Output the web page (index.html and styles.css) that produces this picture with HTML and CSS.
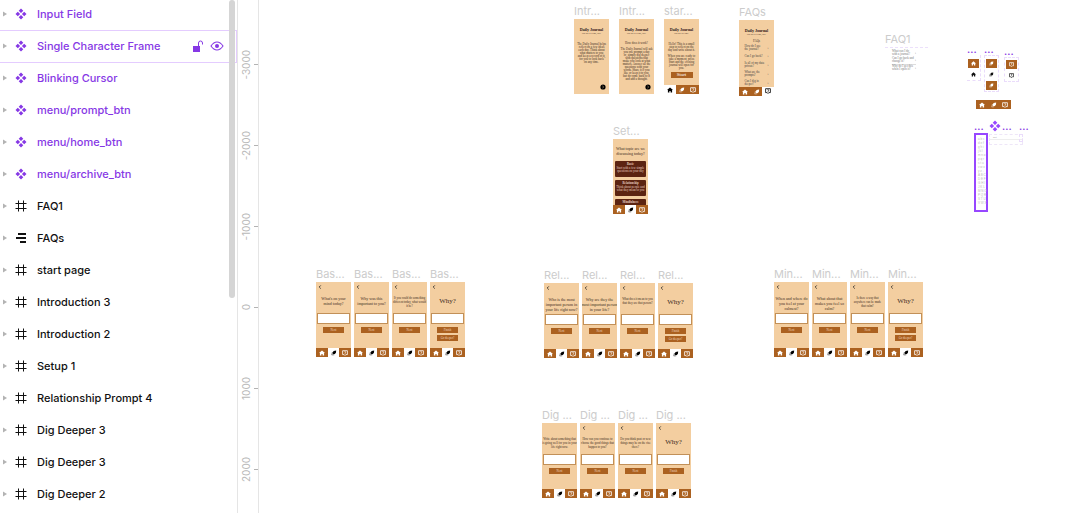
FILE: index.html
```html
<!DOCTYPE html>
<html lang="en">
<head>
<meta charset="utf-8">
<meta name="viewport" content="width=device-width, initial-scale=1">
<title>Journal design file</title>
<link rel="stylesheet" href="styles.css">
</head>
<body>
<svg class="defs" aria-hidden="true">
  <symbol id="arrow" viewBox="0 0 4 6"><path d="M0 .5 4 3 0 5.5z" fill="#b3b3b3"/></symbol>
  <symbol id="component" viewBox="0 0 12 12"><path d="M6 .5 8.3 2.8 6 5.1 3.7 2.8zM6 6.9 8.3 9.2 6 11.5 3.7 9.2zM2.8 3.7 5.1 6 2.8 8.3.5 6zM9.2 3.7 11.5 6 9.2 8.3 6.9 6z" fill="currentColor"/></symbol>
  <symbol id="frame" viewBox="0 0 12 12"><path d="M3.5.5v11M8.5.5v11M.5 3.5h11M.5 8.5h11" stroke="currentColor" fill="none"/></symbol>
  <symbol id="stack" viewBox="0 0 12 12"><path d="M3 2h8M1 6h10M5 10h6" stroke="currentColor" stroke-width="2" fill="none"/></symbol>
  <symbol id="unlock" viewBox="0 0 12 12"><path d="M1 6h7v6H1z" fill="currentColor"/><path d="M6.5 6V3a2 2 0 0 1 4 0v1.5" stroke="currentColor" fill="none"/></symbol>
  <symbol id="eye" viewBox="0 0 14 10"><path d="M1 5C3 2 5 1 7 1s4 1 6 4c-2 3-4 4-6 4S3 8 1 5z" stroke="currentColor" fill="none" stroke-width="1.1"/><circle cx="7" cy="5" r="2" fill="currentColor"/></symbol>
  <symbol id="home" viewBox="0 0 6 6"><path d="M3 .4 6 3.1H5.1v2.4H3.6V4H2.4v1.5H.9V3.1H0z" fill="currentColor"/></symbol>
  <symbol id="pen" viewBox="0 0 6 6"><path d="M2.6.9 5.2.6 4.9 2.8 3.9 4.1 1.7 4.3 1.8 2.2z" fill="currentColor"/><path d="M1.3 2.3.7 5l2.6-.2" stroke="currentColor" stroke-width=".6" stroke-opacity=".7" fill="none"/></symbol>
  <symbol id="archive" viewBox="0 0 6 6"><path d="M.6.7h4.8v3.9H3.8L3 5.5l-.8-.9H.6z" stroke="currentColor" stroke-width=".8" fill="none"/><path d="M2.3 1.7h1.3v1L3 3.1v.8" stroke="currentColor" stroke-width=".6" fill="none"/></symbol>
  <symbol id="back" viewBox="0 0 4 4"><path d="M2.8.4 1.2 2l1.6 1.6" stroke="#222" stroke-width=".8" fill="none"/></symbol>
  <symbol id="next" viewBox="0 0 6 6"><circle cx="3" cy="3" r="2.6" fill="#000"/><path d="M2.5 2 3.6 3 2.5 4" stroke="#f3cea0" stroke-width=".6" fill="none"/></symbol>
  <symbol id="nav-prompt" viewBox="0 0 35 9">
    <path d="M0 0h35v9H0z" fill="#ab6120"/><path d="M12 0h11v9H12z" fill="#fff"/>
    <use href="#home" x="3" y="2" width="6" height="6" color="#fff"/><use href="#pen" x="15" y="2" width="6" height="6" color="#000"/><use href="#archive" x="26" y="2" width="6" height="6" color="#fff"/>
  </symbol>
  <symbol id="nav-home" viewBox="0 0 35 9">
    <path d="M0 0h12v9H0z" fill="#fff"/><path d="M12 0h23v9H12z" fill="#ab6120"/>
    <use href="#home" x="3" y="2" width="6" height="6" color="#000"/><use href="#pen" x="15" y="2" width="6" height="6" color="#fff"/><use href="#archive" x="26" y="2" width="6" height="6" color="#fff"/>
  </symbol>
  <symbol id="nav-archive" viewBox="0 0 35 9">
    <path d="M0 0h23v9H0z" fill="#ab6120"/><path d="M23 0h12v9H23z" fill="#fff"/>
    <use href="#home" x="3" y="2" width="6" height="6" color="#fff"/><use href="#pen" x="15" y="2" width="6" height="6" color="#fff"/><use href="#archive" x="26" y="1" width="6" height="6" color="#000"/>
  </symbol>
  <symbol id="nav-plain" viewBox="0 0 35 9">
    <path d="M0 0h35v9H0z" fill="#ab6120"/>
    <use href="#home" x="3" y="2" width="6" height="6" color="#fff"/><use href="#pen" x="15" y="2" width="6" height="6" color="#fff"/><use href="#archive" x="26" y="2" width="6" height="6" color="#fff"/>
  </symbol>
</svg>

<div class="app">
  <aside class="layers" aria-label="Layers">
    <ul class="layer-list">
      <li class="layer component"><svg class="arrow"><use href="#arrow"/></svg><svg class="icon"><use href="#component"/></svg><span class="name">Input Field</span></li>
      <li class="layer component hovered"><svg class="arrow"><use href="#arrow"/></svg><svg class="icon"><use href="#component"/></svg><span class="name">Single Character Frame</span><button class="tool" aria-label="Lock"><svg class="icon"><use href="#unlock"/></svg></button><button class="tool" aria-label="Hide"><svg class="eye"><use href="#eye"/></svg></button></li>
      <li class="layer component"><svg class="arrow"><use href="#arrow"/></svg><svg class="icon"><use href="#component"/></svg><span class="name">Blinking Cursor</span></li>
      <li class="layer component"><svg class="arrow"><use href="#arrow"/></svg><svg class="icon"><use href="#component"/></svg><span class="name">menu/prompt_btn</span></li>
      <li class="layer component"><svg class="arrow"><use href="#arrow"/></svg><svg class="icon"><use href="#component"/></svg><span class="name">menu/home_btn</span></li>
      <li class="layer component"><svg class="arrow"><use href="#arrow"/></svg><svg class="icon"><use href="#component"/></svg><span class="name">menu/archive_btn</span></li>
      <li class="layer"><svg class="arrow"><use href="#arrow"/></svg><svg class="icon"><use href="#frame"/></svg><span class="name">FAQ1</span></li>
      <li class="layer"><svg class="arrow"><use href="#arrow"/></svg><svg class="icon"><use href="#stack"/></svg><span class="name">FAQs</span></li>
      <li class="layer"><svg class="arrow"><use href="#arrow"/></svg><svg class="icon"><use href="#frame"/></svg><span class="name">start page</span></li>
      <li class="layer"><svg class="arrow"><use href="#arrow"/></svg><svg class="icon"><use href="#frame"/></svg><span class="name">Introduction 3</span></li>
      <li class="layer"><svg class="arrow"><use href="#arrow"/></svg><svg class="icon"><use href="#frame"/></svg><span class="name">Introduction 2</span></li>
      <li class="layer"><svg class="arrow"><use href="#arrow"/></svg><svg class="icon"><use href="#frame"/></svg><span class="name">Setup 1</span></li>
      <li class="layer"><svg class="arrow"><use href="#arrow"/></svg><svg class="icon"><use href="#frame"/></svg><span class="name">Relationship Prompt 4</span></li>
      <li class="layer"><svg class="arrow"><use href="#arrow"/></svg><svg class="icon"><use href="#frame"/></svg><span class="name">Dig Deeper 3</span></li>
      <li class="layer"><svg class="arrow"><use href="#arrow"/></svg><svg class="icon"><use href="#frame"/></svg><span class="name">Dig Deeper 3</span></li>
      <li class="layer"><svg class="arrow"><use href="#arrow"/></svg><svg class="icon"><use href="#frame"/></svg><span class="name">Dig Deeper 2</span></li>
    </ul>
    <div class="thumb"></div>
  </aside>

  <div class="ruler">
    <div class="mark"><span>-3000</span></div>
    <div class="mark"><span>-2000</span></div>
    <div class="mark"><span>-1000</span></div>
    <div class="mark"><span>0</span></div>
    <div class="mark"><span>1000</span></div>
    <div class="mark"><span>2000</span></div>
  </div>

  <main class="canvas">
    <section class="group at-intro">
      <figure class="board"><figcaption>Intr...</figcaption>
        <div class="screen cover"><h2>Daily Journal</h2><p class="sub">One day at a time, easy.</p><p class="copy">The Daily Journal helps<br>reflect on a few ideas<br>each day. Think about<br>what matters to you<br>and keep a record of it,<br>for you to look back<br>on any time.</p><svg class="next"><use href="#next"/></svg></div></figure>
      <figure class="board"><figcaption>Intr...</figcaption>
        <div class="screen cover"><h2>Daily Journal</h2><p class="sub">One day at a time, easy.</p><p class="copy long">How does it work?<br><br>The Daily Journal will ask<br>you one prompt a day<br>or, simply dig deeper<br>with questions that<br>make you look at what<br>matters. Answer all the<br>questions with your<br>words. Share it if you<br>like or keep it to you,<br>but do come back to it<br>and add a thought.</p><svg class="next"><use href="#next"/></svg></div></figure>
      <figure class="board"><figcaption>star...</figcaption>
        <div class="screen cover"><h2>Daily Journal</h2><p class="sub">One day at a time.</p><p class="copy start">Hello! This is a small<br>step to reflect on the<br>day and write about it.<br><br>When you are ready to<br>take a moment, press<br>Start and the evening<br>journal will open for<br>you.</p><button class="start-btn">Start</button><svg class="nav"><use href="#nav-home"/></svg></div></figure>
    </section>

    <section class="group at-faqs">
      <figure class="board"><figcaption>FAQs</figcaption>
        <div class="screen cover tall"><h2>Daily Journal</h2><p class="sub">One day at a time, easy.</p><h3>FAQs</h3>
          <ul class="faq"><li><span>How do I use<br>the journal?</span><b>›</b></li><li><span>Can I go back?</span><b>›</b></li><li><span>Is all of my data<br>private?</span><b>›</b></li><li><span>What are the<br>prompts?</span><b>›</b></li><li><span>Can I dig in<br>deeper?</span><b>›</b></li></ul>
          <svg class="nav"><use href="#nav-archive"/></svg></div></figure>
    </section>

    <section class="group at-setup">
      <figure class="board"><figcaption>Set...</figcaption>
        <div class="screen setup"><p class="pick">What topic are we<br>discussing today?</p>
          <div class="cards"><div class="card"><b>Basic</b>Start with a few simple<br>questions on your day</div><div class="card"><b>Relationship</b>Think about people and<br>what they mean to you</div><div class="card last"><b>Mindfulness</b></div></div>
          <svg class="nav"><use href="#nav-prompt"/></svg></div></figure>
    </section>

    <section class="group at-basic">
      <figure class="board"><figcaption>Bas...</figcaption>
        <div class="screen prompt"><svg class="back"><use href="#back"/></svg><p class="ask">What's on your<br>mind today?</p><input aria-label="Answer"><button>Next</button><svg class="nav"><use href="#nav-prompt"/></svg></div></figure>
      <figure class="board"><figcaption>Bas...</figcaption>
        <div class="screen prompt"><svg class="back"><use href="#back"/></svg><p class="ask">Why was this<br>important to you?</p><input aria-label="Answer"><button>Next</button><svg class="nav"><use href="#nav-prompt"/></svg></div></figure>
      <figure class="board"><figcaption>Bas...</figcaption>
        <div class="screen prompt"><svg class="back"><use href="#back"/></svg><p class="ask small">If you could do something<br>different today, what would<br>it be?</p><input aria-label="Answer"><button>Next</button><svg class="nav"><use href="#nav-prompt"/></svg></div></figure>
      <figure class="board"><figcaption>Bas...</figcaption>
        <div class="screen prompt"><svg class="back"><use href="#back"/></svg><p class="ask why">Why?</p><input aria-label="Answer"><button>Finish</button><button>Go deeper?</button><svg class="nav"><use href="#nav-prompt"/></svg></div></figure>
    </section>

    <section class="group at-relation">
      <figure class="board"><figcaption>Rel...</figcaption>
        <div class="screen prompt"><svg class="back"><use href="#back"/></svg><p class="ask">Who is the most<br>important person in<br>your life right now?</p><input aria-label="Answer"><button>Next</button><svg class="nav"><use href="#nav-prompt"/></svg></div></figure>
      <figure class="board"><figcaption>Rel...</figcaption>
        <div class="screen prompt"><svg class="back"><use href="#back"/></svg><p class="ask">Why are they the<br>most important person<br>in your life?</p><input aria-label="Answer"><button>Next</button><svg class="nav"><use href="#nav-prompt"/></svg></div></figure>
      <figure class="board"><figcaption>Rel...</figcaption>
        <div class="screen prompt"><svg class="back"><use href="#back"/></svg><p class="ask small">What does it mean to you<br>that they are that person?</p><input aria-label="Answer"><button>Next</button><svg class="nav"><use href="#nav-prompt"/></svg></div></figure>
      <figure class="board"><figcaption>Rel...</figcaption>
        <div class="screen prompt"><svg class="back"><use href="#back"/></svg><p class="ask why">Why?</p><input aria-label="Answer"><button>Finish</button><button>Go deeper?</button><svg class="nav"><use href="#nav-prompt"/></svg></div></figure>
    </section>

    <section class="group at-mind">
      <figure class="board"><figcaption>Min...</figcaption>
        <div class="screen prompt"><svg class="back"><use href="#back"/></svg><p class="ask">When and where do<br>you feel at your<br>calmest?</p><input aria-label="Answer"><button>Next</button><svg class="nav"><use href="#nav-prompt"/></svg></div></figure>
      <figure class="board"><figcaption>Min...</figcaption>
        <div class="screen prompt"><svg class="back"><use href="#back"/></svg><p class="ask">What about that<br>makes you feel so<br>calm?</p><input aria-label="Answer"><button>Next</button><svg class="nav"><use href="#nav-prompt"/></svg></div></figure>
      <figure class="board"><figcaption>Min...</figcaption>
        <div class="screen prompt"><svg class="back"><use href="#back"/></svg><p class="ask small">Is there a way that<br>anywhere can be made<br>that calm?</p><input aria-label="Answer"><button>Next</button><svg class="nav"><use href="#nav-prompt"/></svg></div></figure>
      <figure class="board"><figcaption>Min...</figcaption>
        <div class="screen prompt"><svg class="back"><use href="#back"/></svg><p class="ask why">Why?</p><input aria-label="Answer"><button>Finish</button><button>Go deeper?</button><svg class="nav"><use href="#nav-prompt"/></svg></div></figure>
    </section>

    <section class="group at-dig">
      <figure class="board"><figcaption>Dig ...</figcaption>
        <div class="screen prompt"><svg class="back"></svg><p class="ask small">Write about something that<br>is going well for you in your<br>life right now.</p><input aria-label="Answer"><button>Next</button><svg class="nav"><use href="#nav-prompt"/></svg></div></figure>
      <figure class="board"><figcaption>Dig ...</figcaption>
        <div class="screen prompt"><svg class="back"><use href="#back"/></svg><p class="ask small">How can you continue to<br>choose the good things that<br>happen to you?</p><input aria-label="Answer"><button>Next</button><svg class="nav"><use href="#nav-prompt"/></svg></div></figure>
      <figure class="board"><figcaption>Dig ...</figcaption>
        <div class="screen prompt"><svg class="back"><use href="#back"/></svg><p class="ask small">Do you think past or new<br>things may be on the rise<br>there?</p><input aria-label="Answer"><button>Next</button><svg class="nav"><use href="#nav-prompt"/></svg></div></figure>
      <figure class="board"><figcaption>Dig ...</figcaption>
        <div class="screen prompt"><svg class="back"><use href="#back"/></svg><p class="ask why">Why?</p><input aria-label="Answer"><button>Finish</button><svg class="nav"><use href="#nav-prompt"/></svg></div></figure>
    </section>

    <section class="faq-part">
      <h4>FAQ1</h4>
      <ul class="faq"><li><span>What can I do<br>with a journal?</span><b>›</b></li><li><span>Can I go back and<br>change it?</span><b>›</b></li><li class="ruled"><span>Why do I get this<br>when I open it?</span><b>›</b></li></ul>
    </section>

    <section class="set at-home-set"><h4>...</h4><div class="variants open"><svg class="chip"><use href="#home"/></svg><svg class="chip plain"><use href="#home"/></svg></div></section>
    <section class="set at-pen-set"><h4>...</h4><div class="variants"><svg class="chip"><use href="#pen"/></svg><svg class="chip plain"><use href="#pen"/></svg><svg class="chip"><use href="#pen"/></svg></div></section>
    <section class="set at-archive-set"><h4>...</h4><div class="variants"><svg class="chip"><use href="#archive"/></svg><svg class="chip plain"><use href="#archive"/></svg></div></section>
    <svg class="nav at-menu"><use href="#nav-plain"/></svg>

    <svg class="icon badge"><use href="#component"/></svg>
    <section class="set at-characters"><h4>...</h4><div class="characters">a b c<br>d e f<br>g h i<br>j k l<br>m n o<br>p q r<br>s t u<br>v w x<br>y z .<br>A B C<br>D E F<br>G H I<br>J K L<br>M N O<br>P Q R<br>S T U<br>V W X</div></section>
    <section class="set at-field"><h4>...</h4><div class="field"><span>Text</span></div></section>
    <section class="set at-cursor"><h4>...</h4><div class="cursor"></div></section>
  </main>
</div>
</body>
</html>
```
FILE: styles.css
```css
* { box-sizing: border-box; }
body, ul, p, h2, h3, h4, figure { margin: 0; padding: 0; }
ul { list-style: none; }
body { font-family: Inter, "Liberation Sans", sans-serif; font-size: 11px; background: #fff; color: #111; }
svg { display: block; flex: none; }
button { font: inherit; border: 0; padding: 0; margin: 0; }
.defs { position: absolute; width: 0; height: 0; }

.app { display: flex; height: 100vh; overflow: hidden; }

/* Layer list */
.layers { position: relative; flex: none; width: 238px; border-right: 1px solid #e5e5e5; overflow: hidden; }
.layer-list { margin-top: -2px; }
.layer { display: flex; align-items: center; height: 32px; padding: 0 13px 0 3px; }
.layer.component { color: #8638e5; }
.layer.hovered { height: 33px; margin-bottom: -1px; padding-right: 12px; padding-bottom: 1px; border: 1px solid #e4ccff; border-left: 0; }
.arrow { width: 4px; height: 6px; margin-right: 8px; }
.icon { width: 12px; height: 12px; }
.name { flex: 1; margin-left: 10px; font-weight: 500; white-space: nowrap; }
.tool { color: inherit; background: none; margin-left: 6px; }
.eye { width: 14px; height: 10px; }
.thumb { position: absolute; top: 0; right: 2px; width: 6px; height: 298px; border-radius: 3px; background: #d5d5d5; }

/* Ruler */
.ruler { flex: none; width: 21px; padding-top: 24px; border-right: 1px solid #e5e5e5; }
.mark { display: flex; align-items: center; height: 81px; color: #b8b8b8; font-size: 10px; background: linear-gradient(#b3b3b3, #b3b3b3) right center / 4px 1px no-repeat; }
.mark span { width: 16px; writing-mode: vertical-rl; transform: rotate(180deg); line-height: 16px; text-align: center; }

/* Canvas placement */
.canvas { position: relative; flex: 1; min-width: 0; }
.group, .set, .faq-part, .at-menu, .badge { position: absolute; }
.group { display: flex; gap: 3px; }
.at-intro { left: 315px; top: 4px; gap: 10px; }
.at-faqs { left: 480px; top: 5px; }
.at-setup { left: 354px; top: 124px; }
.at-basic { left: 57px; top: 267px; }
.at-relation { left: 285px; top: 268px; }
.at-mind { left: 515px; top: 267px; }
.at-dig { left: 283px; top: 408px; }
.faq-part { left: 626px; top: 32px; }
.at-home-set { left: 708px; top: 43px; }
.at-pen-set { left: 725px; top: 43px; }
.at-archive-set { left: 745px; top: 45px; }
.at-menu { left: 717px; top: 100px; }
.at-characters { left: 715px; top: 120px; }
.at-field { left: 730px; top: 120px; }
.at-cursor { left: 760px; top: 120px; }
.badge { left: 730px; top: 120px; color: #9747ff; }

/* Artboards */
.board { width: 35px; }
figcaption { margin-bottom: 1px; line-height: 14px; white-space: nowrap; color: #cccccc; }
.screen { display: flex; flex-direction: column; align-items: center; height: 75px; background: #f3cea0; overflow: hidden; font: 3px/4px "Liberation Serif", serif; text-align: center; color: #3c2d20; }
.screen.tall { height: 76px; }
.screen p { white-space: nowrap; }
.nav { width: 35px; height: 9px; }
.screen .nav { margin-top: auto; }

.cover { padding-top: 9px; }
.cover h2 { font-size: 4px; line-height: 4px; white-space: nowrap; color: #2b2018; }
.sub { font-size: 2px; line-height: 3px; }
.copy { margin-top: 8px; font-size: 3px; line-height: 3px; }
.copy.long { margin-top: 7px; }
.next { width: 6px; height: 6px; margin: auto 3px 4px auto; }
.copy.start { height: 27px; }
.start-btn { width: 22px; height: 6px; margin-top: 2px; background: #ab6120; color: #fff; font-size: 5px; line-height: 6px; }
.cover h3 { margin-top: 3px; font-size: 3px; line-height: 4px; font-weight: 400; }
.faq { display: flex; flex-direction: column; gap: 3px; font: 3px/3px "Liberation Serif", serif; text-align: left; color: #444; }
.faq li { display: flex; justify-content: space-between; align-items: center; width: 24px; min-height: 5px; white-space: nowrap; }
.cover .faq { margin-top: 2px; }

.pick { margin-top: 7px; font-size: 4px; line-height: 5px; }
.cards { display: flex; flex-direction: column; gap: 3px; margin-top: 5px; }
.setup .nav { flex: none; }
.card { flex: none; width: 31px; height: 16px; padding-top: 2px; border-radius: 1px; background: #5c2411; color: #e8cfc0; font-size: 3px; line-height: 3px; white-space: nowrap; }
.card b { display: block; margin-bottom: 1px; }
.card.last { height: 6px; border-radius: 1px 1px 0 0; }

.back { width: 4px; height: 4px; margin: 3px auto 0 2px; }
.ask { height: 24px; padding-top: 7px; font-size: 4px; line-height: 5px; }
.ask.small { font-size: 3px; line-height: 4px; }
.ask.why { font-size: 7px; line-height: 10px; }
.prompt input { width: 33px; height: 11px; padding: 0 1px; border: 1px solid #c29058; border-radius: 0; background: #fff; font: inherit; }
.prompt button { width: 21px; height: 6px; margin-top: 3px; background: #ab6120; color: #f3dcc2; font-size: 3px; line-height: 6px; }
.prompt button + button { margin-top: 2px; }

/* Loose parts */
.faq-part h4, .set h4 { font-size: 11px; line-height: 14px; font-weight: 400; color: #cccccc; }
.faq-part .faq { width: 43px; margin-top: 1px; padding: 2px 7px; border-top: 1px dashed #ece0fb; gap: 1px; }
.faq-part li { color: #777; }
.faq .ruled { border-top: 1px solid #ddd; }
.set h4 { font-size: 10px; line-height: 12px; font-weight: 600; color: #8638e5; }
.variants { display: flex; flex-direction: column; gap: 2px; padding: 2px 1px 1px; border: 1px dashed #eadcfb; }
.variants.open { border-width: 0 1px 1px 0; padding-top: 4px; }
.at-pen-set .variants { padding-top: 3px; }
.chip { width: 11px; height: 9px; padding: 2px; background: #ab6120; color: #fff; }
.chip.plain { background: none; color: #111; }
.characters { width: 14px; height: 79px; margin-top: 1px; padding: 2px; border: 2px solid #9747ff; font: 3px/4px "Liberation Sans", sans-serif; color: #bbb; white-space: nowrap; }
.at-field h4 { margin-left: 13px; }
.field { width: 34px; height: 11px; margin-top: 2px; padding-left: 3px; border: 1px dashed #eee6f8; font: 2px/4px "Liberation Sans", sans-serif; color: #999; background: linear-gradient(#eee, #eee) 0 4px / 100% 1px no-repeat; }
.cursor { width: 4px; height: 8px; margin-top: 2px; border: 1px dashed #eadcfb; }
```
